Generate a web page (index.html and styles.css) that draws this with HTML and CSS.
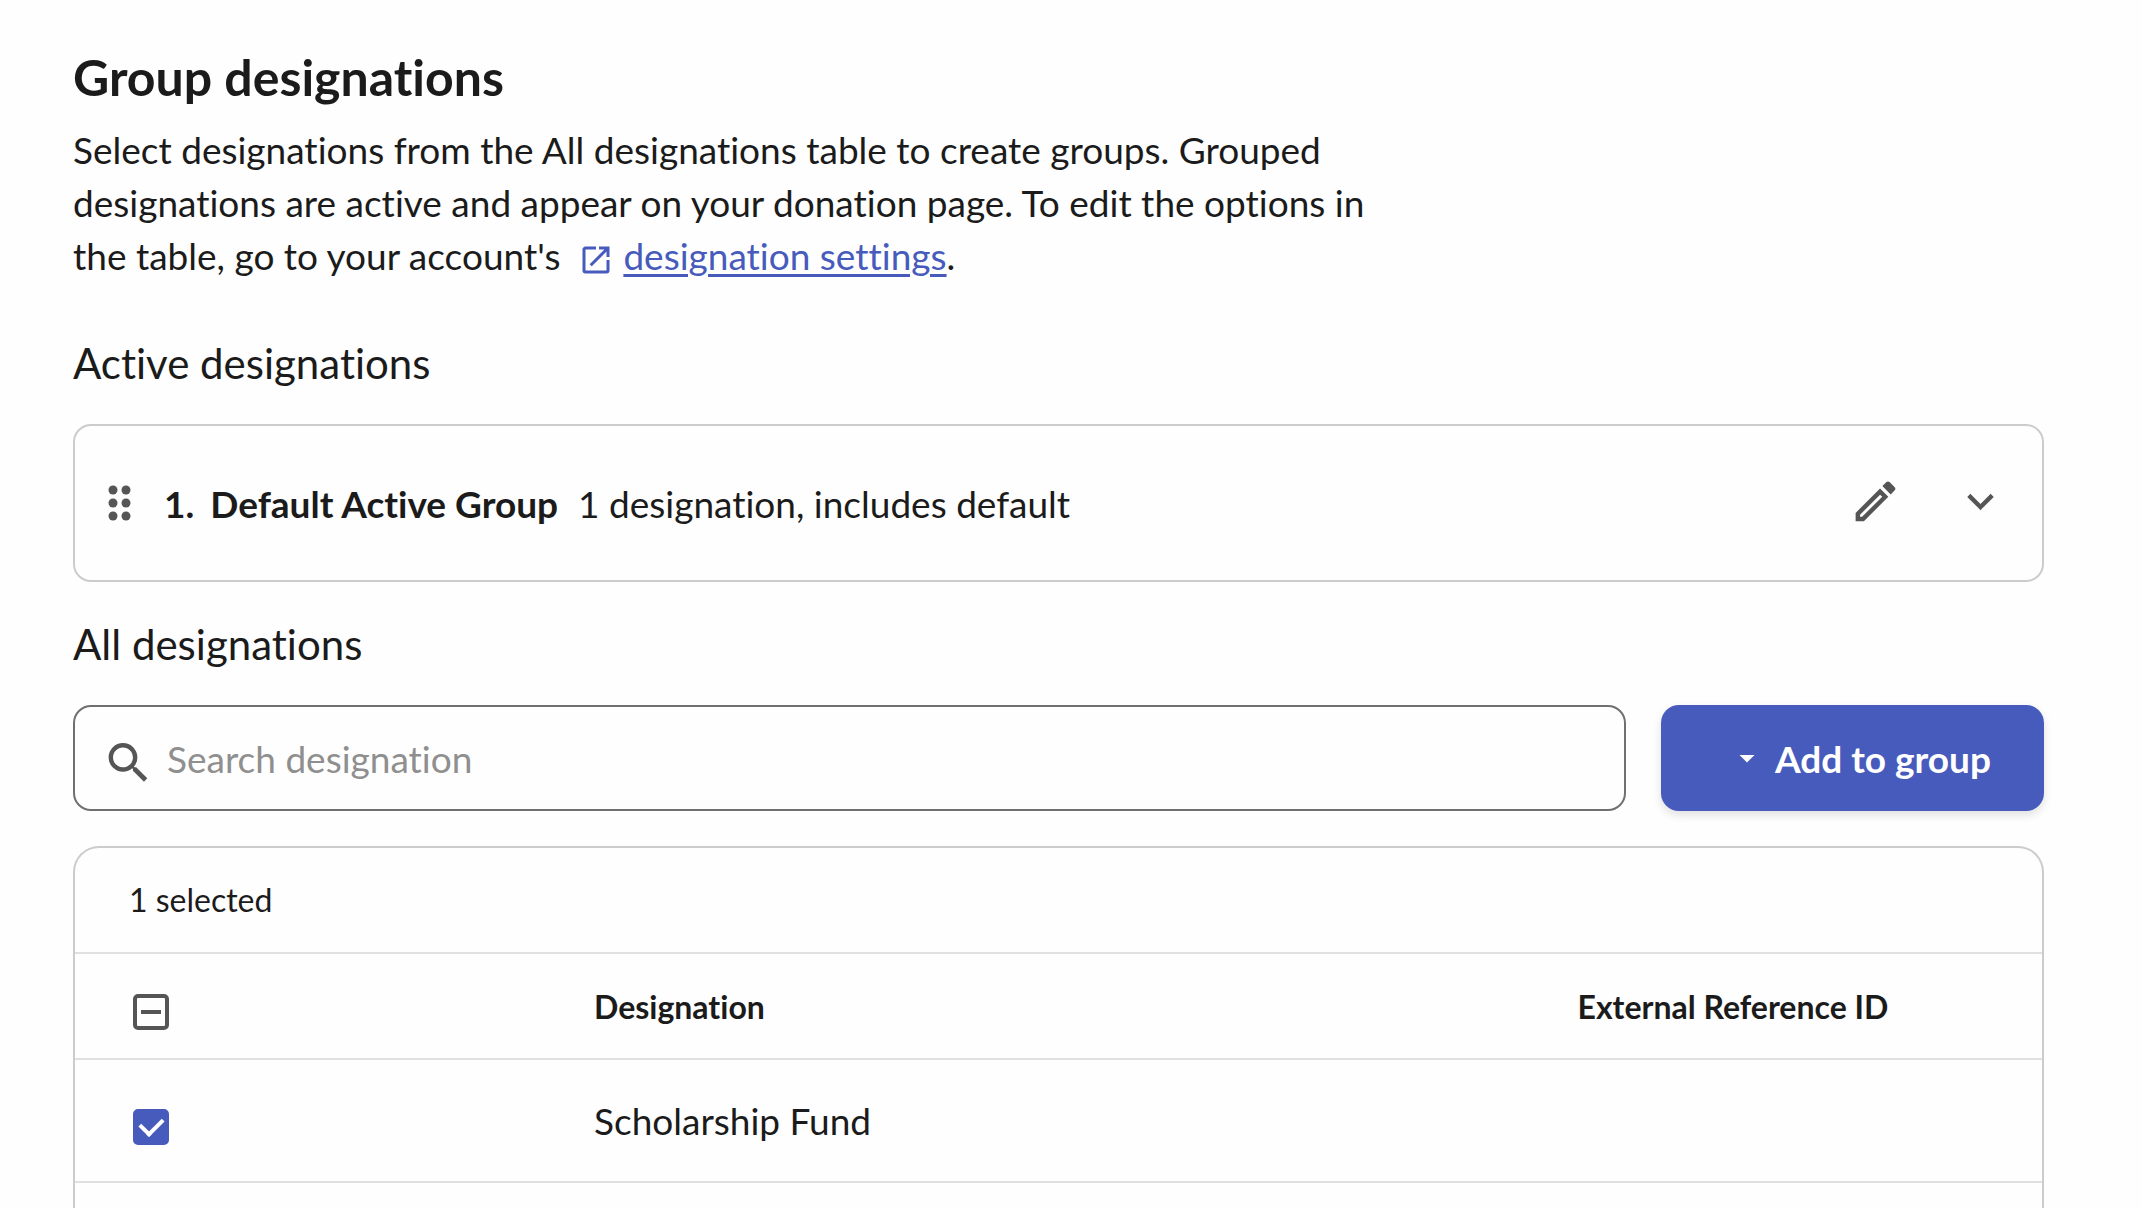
FILE: index.html
```html
<!DOCTYPE html>
<html lang="en">
<head>
    <meta charset="UTF-8">
    <meta name="viewport" content="width=device-width, initial-scale=1.0">
    <title>Group designations</title>
    <link rel="stylesheet" href="styles.css">
</head>
<body>
    <main class="page">
        <header class="intro">
            <h1>Group designations</h1>
            <p>Select designations from the All designations table to create groups. Grouped designations are active and appear on your donation page. To edit the options in the table, go to your account's
                <svg class="link-icon" viewBox="0 0 24 24" aria-hidden="true"><path d="M14,3V5H17.59L7.76,14.83L9.17,16.24L19,6.41V10H21V3M19,19H5V5H12V3H5C3.89,3 3,3.9 3,5V19A2,2 0 0,0 5,21H19A2,2 0 0,0 21,19V12H19V19Z"/></svg>
                <a href="#">designation settings</a>.</p>
        </header>

        <section>
            <h2>Active designations</h2>
            <div class="group-card">
                <svg class="drag-handle" viewBox="0 0 24 36" aria-hidden="true">
                    <circle cx="5" cy="5" r="4.5"/><circle cx="18" cy="5" r="4.5"/>
                    <circle cx="5" cy="18" r="4.5"/><circle cx="18" cy="18" r="4.5"/>
                    <circle cx="5" cy="31" r="4.5"/><circle cx="18" cy="31" r="4.5"/>
                </svg>
                <strong class="group-number">1.</strong>
                <strong class="group-name">Default Active Group</strong>
                <span class="group-info">1 designation, includes default</span>
                <button type="button" class="icon-button" aria-label="Edit group">
                    <svg viewBox="0 1 24 24"><path fill-rule="evenodd" d="M3,17.25L14.06,6.19L17.81,9.94L6.75,21H3Z M5,18.08V19H5.92L15.06,9.94L14.06,9.02Z"/><path d="M20.71,7.04C21.1,6.65 21.1,6 20.71,5.63L18.37,3.29C18,2.9 17.35,2.9 16.96,3.29L15.12,5.12L18.87,8.87Z"/></svg>
                </button>
                <button type="button" class="icon-button" aria-label="Expand group">
                    <svg viewBox="0 1 24 24"><path d="M7.41,8.58L12,13.17L16.59,8.58L18,10L12,16L6,10L7.41,8.58Z"/></svg>
                </button>
            </div>
        </section>

        <section class="all-designations">
            <h2>All designations</h2>
            <div class="toolbar">
                <label class="search">
                    <svg viewBox="0 -2 24 24" aria-hidden="true"><path d="M9.5,3A6.5,6.5 0 0,1 16,9.5C16,11.11 15.41,12.59 14.44,13.73L14.71,14H15.5L20.5,19L19,20.5L14,15.5V14.71L13.73,14.44C12.59,15.41 11.11,16 9.5,16A6.5,6.5 0 0,1 3,9.5A6.5,6.5 0 0,1 9.5,3M9.5,5C7,5 5,7 5,9.5C5,12 7,14 9.5,14C12,14 14,12 14,9.5C14,7 12,5 9.5,5Z"/></svg>
                    <input type="text" placeholder="Search designation" aria-label="Search designation">
                </label>
                <button type="button" class="add-button">
                    <svg viewBox="0 0 24 24" aria-hidden="true"><path d="M7,10L12,15L17,10H7Z"/></svg>
                    Add to group
                </button>
            </div>

            <div class="table-box">
                <div class="selected-count">1 selected</div>
                <table>
                    <thead>
                        <tr>
                            <th class="check-col"><input type="checkbox" id="selectAll" aria-label="Select all"></th>
                            <th class="name-col">Designation</th>
                            <th>External Reference ID</th>
                        </tr>
                    </thead>
                    <tbody>
                        <tr>
                            <td class="check-col"><input type="checkbox" aria-label="Select Scholarship Fund" checked></td>
                            <td>Scholarship Fund</td>
                            <td></td>
                        </tr>
                    </tbody>
                </table>
            </div>
        </section>
    </main>

    <script>
        document.getElementById('selectAll').indeterminate = true;
    </script>
</body>
</html>
```
FILE: styles.css
```css
* {
    box-sizing: border-box;
}
body {
    margin: 0;
    background: #fefefe;
    color: #1b1b1b;
    font-family: Lato, "Open Sans", sans-serif;
    font-size: 37px;
    font-variant-ligatures: none;
    line-height: 53px;
}
.page {
    display: flex;
    flex-direction: column;
    min-height: 100vh;
    padding: 47px 98px 0 73px;
}
h1 {
    margin: 0 0 16px;
    font-size: 50px;
    line-height: 60px;
}
h2 {
    margin: 0 0 33px;
    font-size: 42px;
    line-height: 56px;
    font-weight: 400;
}
p {
    max-width: 1340px;
    margin: 0 0 53px;
}
a {
    color: #475bbc;
    text-decoration-thickness: 3px;
    text-underline-offset: 4px;
}
svg {
    flex: none;
    fill: #555;
}
.link-icon {
    width: 36px;
    height: 36px;
    margin-left: 8px;
    vertical-align: -8px;
    fill: #475bbc;
}
.group-card {
    display: flex;
    align-items: center;
    height: 158px;
    margin-bottom: 34px;
    padding: 0 35px 0 33px;
    border: 2px solid #ccc;
    border-radius: 18px;
}
.drag-handle {
    width: 24px;
    height: 36px;
}
.group-number {
    margin-left: 32px;
}
.group-name {
    margin-left: 16px;
}
.group-info {
    flex: 1;
    margin-left: 20px;
}
.icon-button {
    display: flex;
    margin-left: 52px;
    padding: 0;
    border: none;
    background: none;
    cursor: pointer;
}
.icon-button svg,
.search svg {
    width: 53px;
    height: 53px;
}
.all-designations {
    display: flex;
    flex: 1;
    flex-direction: column;
}
.toolbar {
    display: flex;
    gap: 35px;
    margin-bottom: 35px;
}
.search {
    display: flex;
    flex: 1;
    align-items: center;
    height: 106px;
    padding: 0 27px;
    border: 2px solid #707070;
    border-radius: 18px;
}
.search input {
    flex: 1;
    height: 60px;
    margin-left: 12px;
    padding: 0;
    border: none;
    outline: none;
    background: none;
    color: inherit;
    font: inherit;
}
.search input::placeholder {
    color: #8f8f8f;
}
.add-button {
    display: flex;
    align-items: center;
    justify-content: flex-end;
    gap: 10px;
    min-width: 383px;
    padding: 0 53px;
    border: none;
    border-radius: 18px;
    background: #475bbc;
    box-shadow: 0 4px 10px rgba(0, 0, 0, 0.12);
    color: #fff;
    font: inherit;
    font-weight: 700;
    cursor: pointer;
}
.add-button svg {
    width: 36px;
    height: 36px;
    fill: #fff;
}
.table-box {
    flex: 1;
    border: 2px solid #ccc;
    border-bottom: none;
    border-radius: 26px 26px 0 0;
}
.selected-count {
    padding: 26px 54px;
    border-bottom: 2px solid #e0e0e0;
    font-size: 32px;
    line-height: 52px;
}
table {
    width: 100%;
    table-layout: fixed;
    border-collapse: separate;
    border-spacing: 0;
}
th,
td {
    height: 123px;
    padding: 0 56px;
    border-bottom: 2px solid #e0e0e0;
    text-align: left;
}
th {
    height: 106px;
    font-size: 32px;
}
.check-col {
    width: 463px;
    padding-top: 12px;
}
.name-col {
    width: 50%;
}
input[type="checkbox"] {
    display: grid;
    place-content: center;
    width: 36px;
    height: 36px;
    margin: 0 2px;
    border: 4px solid #555;
    border-radius: 5px;
    appearance: none;
}
input[type="checkbox"]:indeterminate::after {
    content: "";
    width: 20px;
    height: 4px;
    background: #555;
}
input[type="checkbox"]:checked {
    border-color: #475bbc;
    background: #475bbc;
}
input[type="checkbox"]:checked::after {
    content: "";
    width: 11px;
    height: 18px;
    border: solid #fff;
    border-width: 0 4px 4px 0;
    transform: translateY(-3px) rotate(45deg);
}
```
